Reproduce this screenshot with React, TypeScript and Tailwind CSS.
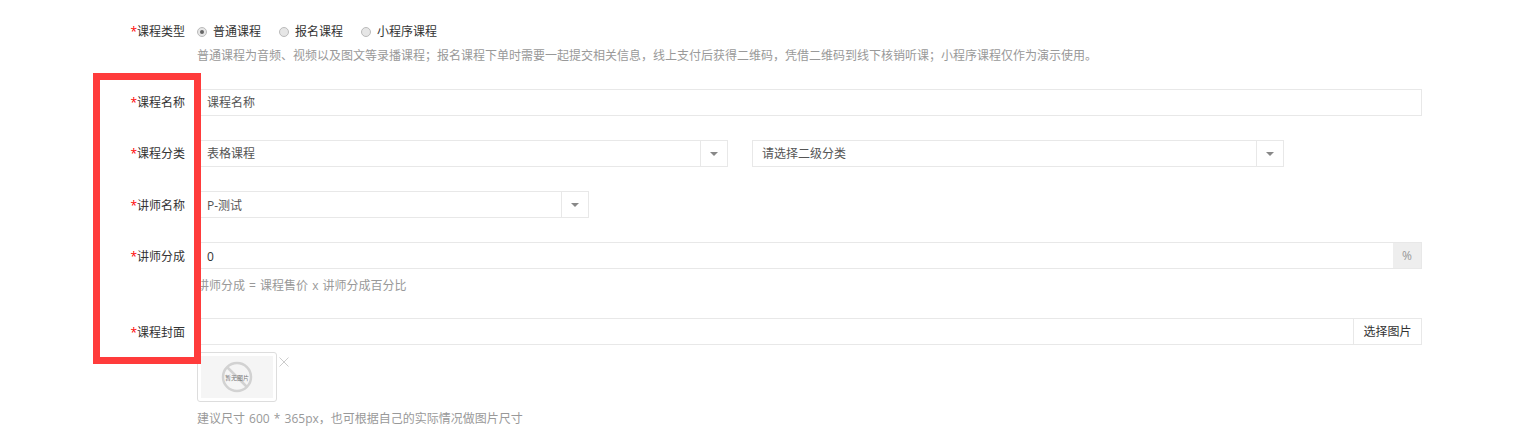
import React from 'react';

const fontStack = '[font-family:"Open_Sans","Noto_Sans_CJK_SC",sans-serif]';

const Label = ({ text, className = '' }: { text: string; className?: string }) => (
  <label className={`h-[27px] w-[185px] shrink-0 text-right text-[12px] leading-[27px] text-[#333] ${className}`}>
    <span className="text-[#f00]">*</span>
    {text}
  </label>
);

const Radio = ({ text, checked }: { text: string; checked?: boolean }) => (
  <div className="mr-[18px] flex items-center">
    <span className="flex h-[10px] w-[10px] items-center justify-center rounded-full border border-[#bbb] bg-[#e6e6e6]">
      {checked && <span className="h-[4px] w-[4px] rounded-full bg-[#666]" />}
    </span>
    <span className="ml-[6px] text-[12px] text-[#333]">{text}</span>
  </div>
);

const Help = ({ children }: { children: React.ReactNode }) => (
  <p className="text-[12px] leading-[18px] text-[#999] [word-spacing:1px]">{children}</p>
);

const SelectBox = ({ value, className, textClass = 'leading-[25px]' }: { value: string; className: string; textClass?: string }) => (
  <div className={`flex h-[27px] border border-[#e8e8e8] bg-white ${className}`}>
    <div className={`flex-1 pl-[9px] text-[12px] text-[#555] ${textClass}`}>{value}</div>
    <div className="flex w-[27px] items-center justify-center border-l border-[#e8e8e8]">
      <span className="h-0 w-0 border-x-[4px] border-t-[4px] border-x-transparent border-t-[#888]" />
    </div>
  </div>
);

const NoImage = () => (
  <svg width="72" height="42" viewBox="0 0 72 42">
    <rect width="72" height="42" fill="#f5f5f5" />
    <circle cx="36" cy="21" r="14" fill="none" stroke="#d2d2d2" strokeWidth="2.5" />
    <line x1="26" y1="11" x2="46" y2="31" stroke="#d2d2d2" strokeWidth="2.5" />
    <text x="36" y="23.5" textAnchor="middle" fontSize="6" fill="#777">暂无图片</text>
  </svg>
);

export default function App() {
  return (
    <div className={`relative h-[437px] w-[1534px] overflow-hidden bg-white ${fontStack}`}>
      <div className="flex flex-col pt-[18px]">
        <div className="flex">
          <Label text="课程类型" />
          <div className="ml-[12px] flex items-center">
            <Radio text="普通课程" checked />
            <Radio text="报名课程" />
            <Radio text="小程序课程" />
          </div>
        </div>
        <div className="ml-[197px] mt-[2px]">
          <Help>普通课程为音频、视频以及图文等录播课程；报名课程下单时需要一起提交相关信息，线上支付后获得二维码，凭借二维码到线下核销听课；小程序课程仅作为演示使用。</Help>
        </div>

        <div className="mt-[24px] flex">
          <Label text="课程名称" />
          <div className="ml-[12px] h-[27px] w-[1225px] border border-[#e8e8e8] pl-[9px] text-[12px] leading-[25px] text-[#555]">课程名称</div>
        </div>

        <div className="mt-[24px] flex">
          <Label text="课程分类" />
          <div className="ml-[12px] flex gap-[24px]">
            <SelectBox value="表格课程" className="w-[531px]" />
            <SelectBox value="请选择二级分类" className="w-[532px]" />
          </div>
        </div>

        <div className="mt-[24px] flex">
          <Label text="讲师名称" className="pt-[1px]" />
          <SelectBox value="P-测试" className="ml-[12px] w-[392px]" textClass="leading-[27px]" />
        </div>

        <div className="mt-[24px] flex">
          <Label text="讲师分成" className="pt-[1px]" />
          <div className="ml-[12px] flex h-[27px] w-[1225px] border border-[#e8e8e8]">
            <div className="flex-1 pl-[9px] text-[12px] leading-[27px] text-[#333]">0</div>
            <div className="w-[28px] bg-[#eee] text-center text-[12px] leading-[25px] text-[#999]">%</div>
          </div>
        </div>
        <div className="ml-[197px] mt-[8px]">
          <Help>讲师分成 = 课程售价 x 讲师分成百分比</Help>
        </div>

        <div className="mt-[23px] flex">
          <Label text="课程封面" className="pt-[1px]" />
          <div className="ml-[12px] flex h-[27px] w-[1225px] border border-[#e8e8e8]">
            <div className="flex-1" />
            <div className="w-[68px] border-l border-[#e8e8e8] text-center text-[12px] leading-[25px] text-[#333]">选择图片</div>
          </div>
        </div>

        <div className="ml-[197px] mt-[7px] flex items-start">
          <div className="flex h-[50px] w-[80px] items-center justify-center rounded-[3px] border border-[#ddd] bg-white">
            <NoImage />
          </div>
          <svg width="10" height="10" viewBox="0 0 10 10" className="ml-[2px] mt-[5px]">
            <path d="M0.5 0.5 L9.5 9.5 M9.5 0.5 L0.5 9.5" stroke="#ccc" strokeWidth="1" fill="none" />
          </svg>
        </div>
        <div className="ml-[197px] mt-[8px]">
          <Help>建议尺寸 600 * 365px，也可根据自己的实际情况做图片尺寸</Help>
        </div>
      </div>

      {/* red annotation box drawn over the form */}
      <div className="absolute left-[93px] top-[73px] h-[291px] w-[108px] border-[7px] border-[#ff3b3b]" />
    </div>
  );
}
